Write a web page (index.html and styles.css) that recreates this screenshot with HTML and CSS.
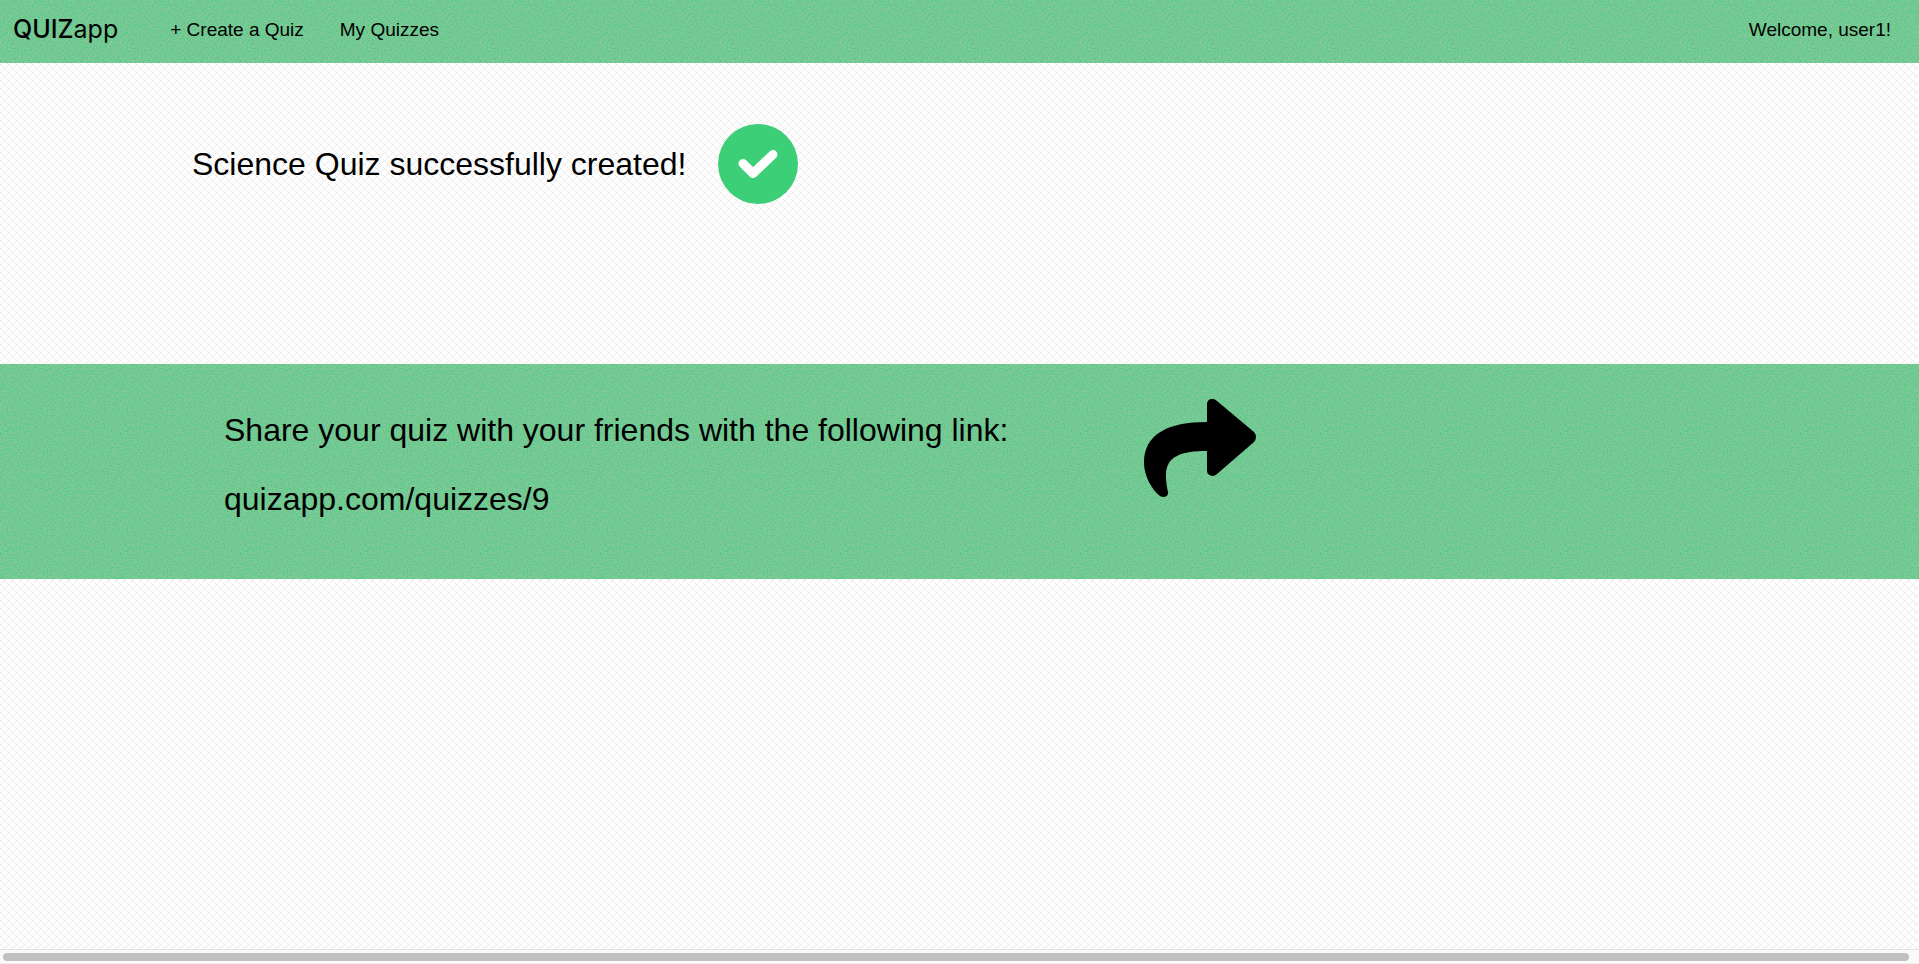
FILE: index.html
```html
<!DOCTYPE html>
<html lang="en">
<head>
<meta charset="utf-8">
<title>QUIZapp</title>
<link rel="stylesheet" href="styles.css">
</head>
<body>
<header class="navbar">
  <a class="logo" href="#"><span class="logo-strong">QUIZ</span>app</a>
  <nav class="nav-links">
    <a href="#">+ Create a Quiz</a>
    <a href="#">My Quizzes</a>
  </nav>
  <span class="welcome">Welcome, user1!</span>
</header>
<main class="content">
  <section class="created">
    <h1>Science Quiz successfully created!</h1>
    <svg class="check" viewBox="0 0 80 80" aria-hidden="true">
      <circle cx="40" cy="40" r="40" fill="#3dcf77"/>
      <path d="M25 39.500L35 49.500L55 30.500" fill="none" stroke="#fff" stroke-width="9" stroke-linecap="round" stroke-linejoin="round"/>
    </svg>
  </section>
  <section class="share">
    <div class="share-text">
      <p>Share your quiz with your friends with the following link:</p>
      <p>quizapp.com/quizzes/9</p>
    </div>
    <svg class="arrow" viewBox="0 0 112 98" aria-hidden="true">
      <path d="M63 23V5C63 0 69-2 73 2L110 33Q114 38 110 43L73 75C69 79 63 76 63 72V52C38 52 22 57 22 76C22 84 23 88 24 93C25 98 19 99 16 97C8 91 0 77 0 64C0 35 24 23 63 23Z"/>
    </svg>
  </section>
</main>
<div class="scroll-track"><div class="scroll-thumb"></div></div>
</body>
</html>
```
FILE: styles.css
```css
* {
  box-sizing: border-box;
}

body {
  --weave: url("data:image/svg+xml,%3Csvg xmlns='http://www.w3.org/2000/svg' width='8' height='8' shape-rendering='crispEdges'%3E%3Cpath fill='%23e6e6e6' d='M0 0h1v1H0zM1 1h1v1H1zM2 2h1v1H2zM3 3h1v1H3zM4 4h1v1H4zM5 5h1v1H5zM7 7h1v1H7zM7 1h1v1H7zM6 2h1v1H6zM5 3h1v1H5zM3 5h1v1H3zM2 6h1v1H2z'/%3E%3C/svg%3E");
  --grain: url("data:image/svg+xml,%3Csvg xmlns='http://www.w3.org/2000/svg' width='120' height='120'%3E%3Cfilter id='n' x='0' y='0' width='100%25' height='100%25' color-interpolation-filters='sRGB'%3E%3CfeTurbulence type='fractalNoise' baseFrequency='.7' numOctaves='2' stitchTiles='stitch'/%3E%3CfeColorMatrix values='0 0 0 0 .27 0 0 0 0 .81 0 0 0 0 .48 2.5 0 0 0 -1'/%3E%3C/filter%3E%3Crect width='120' height='120' filter='url(%23n)'/%3E%3C/svg%3E");
  display: flex;
  flex-direction: column;
  min-height: 100vh;
  margin: 0;
  background: #fff var(--weave);
  color: #000;
  font-family: "Liberation Sans", Arial, sans-serif;
}

a {
  color: inherit;
  text-decoration: none;
}

.navbar {
  display: flex;
  align-items: center;
  padding: 16px 28px 20px 13px;
  background: #84c79c var(--grain);
  font-size: 19px;
  line-height: 27px;
}

.logo {
  font-family: Inter, sans-serif;
  font-size: 25px;
}

.logo-strong {
  font-weight: 500;
}

.nav-links {
  display: flex;
  gap: 36px;
  margin-left: 52px;
}

.welcome {
  margin-left: auto;
}

.content {
  flex: 1;
}

.created {
  display: flex;
  align-items: center;
  gap: 32px;
  padding: 61px 192px 160px;
}

h1,
p {
  margin: 0;
  font-size: 32px;
  font-weight: 400;
  line-height: 36px;
}

.check {
  width: 80px;
}

.share {
  display: flex;
  align-items: flex-start;
  gap: 136px;
  padding: 35px 224px 61px;
  background: #84c79c var(--grain);
}

.share-text {
  display: grid;
  gap: 33px;
  padding-top: 13px;
}

.share .arrow {
  width: 112px;
  margin-bottom: 21px;
}

.scroll-track {
  padding: 3px 10px 2px 3px;
  border-top: 1px solid #e3e3e3;
  border-bottom: 1px solid #ededed;
  background: #fafafa;
}

.scroll-thumb {
  height: 8px;
  border-radius: 4px;
  background: #c1c1c1;
}
```
